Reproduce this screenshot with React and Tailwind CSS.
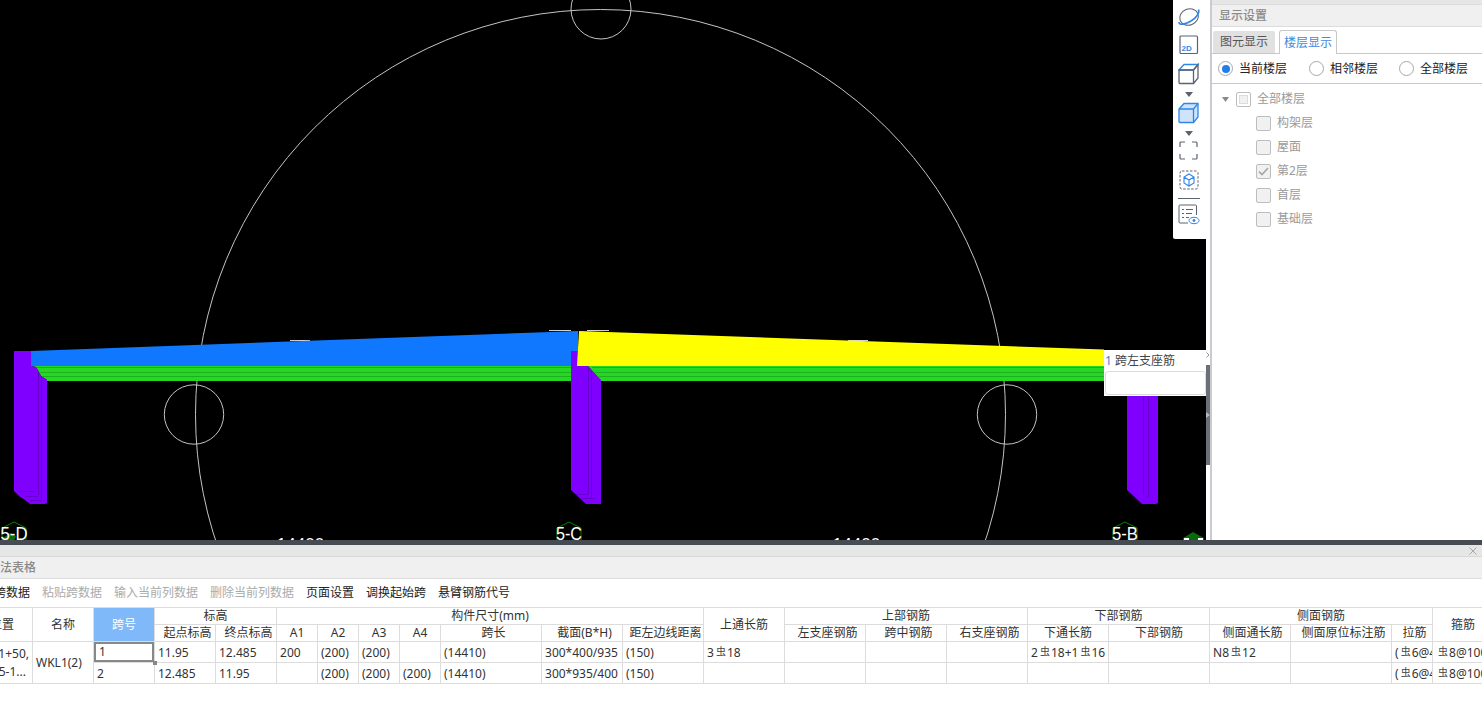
import React from "react";

const F = { fontFamily: '"Noto Sans","Noto Sans CJK SC",sans-serif' };

function Rebar() {
  return <span className="relative top-[-2px] ml-[2px] mr-[1px] text-[10px] text-[#444]">虫</span>;
}

function Canvas() {
  const purple = "#8000ff";
  const line = "#6600cc";
  const hex = (cx) => `${cx - 12},545 ${cx - 12},528 ${cx},522 ${cx + 12},528 ${cx + 12},545`;
  return (
    <svg width="1206" height="540" className="block">
      <g fill="none" stroke="#c4c4c4" strokeWidth="1">
        <circle cx="600.5" cy="414.5" r="405" />
        <circle cx="601" cy="9" r="30" />
        <circle cx="194" cy="414.5" r="29.7" />
        <circle cx="1007" cy="414.5" r="29.7" />
      </g>
      <g stroke="#d0d0d0">
        <line x1="290" y1="340.5" x2="310" y2="340.5" />
        <line x1="549" y1="330.5" x2="571" y2="330.5" />
        <line x1="587" y1="330.5" x2="609" y2="330.5" />
        <line x1="848" y1="340.5" x2="868" y2="340.5" />
      </g>
      <polygon points="31,366 36,367 39,372 41,376 47,380 47,381 571,381 571,366" fill="#24d824" />
      <polygon points="588,366 1104,366 1104,381 601,381" fill="#24d824" />
      <g stroke="#1eb01e">
        <line x1="36" y1="367.5" x2="571" y2="367.5" />
        <line x1="39" y1="372.5" x2="571" y2="372.5" />
        <line x1="41" y1="376.5" x2="571" y2="376.5" />
        <line x1="592" y1="367.5" x2="1104" y2="367.5" />
        <line x1="595" y1="372.5" x2="1104" y2="372.5" />
        <line x1="599" y1="376.5" x2="1104" y2="376.5" />
      </g>
      <polygon points="14,351 31,351 31,366 36,367 39,372 41,376 47,380 47,503 45,504 30,504 25,500 19,496 14,491" fill={purple} />
      <g stroke={line}>
        <line x1="38.5" y1="372" x2="38.5" y2="495" />
        <line x1="41.5" y1="376" x2="41.5" y2="500" />
        <line x1="19" y1="491.5" x2="35" y2="491.5" />
        <line x1="25" y1="496.5" x2="38" y2="496.5" />
        <line x1="30" y1="500.5" x2="41" y2="500.5" />
      </g>
      <polygon points="31,351 578,331 578,366 31,366" fill="#1078ff" />
      <polygon points="571,351 578,351 578,366 588,366 601,380 601,504 586,504 571,490" fill={purple} />
      <g stroke={line}>
        <line x1="588.5" y1="368" x2="588.5" y2="494" />
        <line x1="591.5" y1="371" x2="591.5" y2="498" />
        <line x1="576" y1="494.5" x2="588" y2="494.5" />
        <line x1="581" y1="498.5" x2="595" y2="498.5" />
      </g>
      <polygon points="579,331 1104,349.5 1104,366 577,366" fill="#ffff00" />
      <polygon points="1127,396 1158,396 1158,503 1156,504 1142,504 1127,490" fill={purple} />
      <g stroke={line}>
        <line x1="1143.5" y1="396" x2="1143.5" y2="495" />
        <line x1="1148.5" y1="396" x2="1148.5" y2="498" />
      </g>
      <g fill="none" stroke="#0b7d0b">
        <polygon points={hex(14)} />
        <polygon points={hex(569)} />
        <polygon points={hex(1125)} />
      </g>
      <polygon points="3,538 10,533 16,536 14,541 3,541" fill="#0b6e0b" />
      <g fill="#ffffff" fontSize="18" fontFamily='"Liberation Sans",sans-serif' textAnchor="middle">
        <text x="14" y="540" textLength="27" lengthAdjust="spacingAndGlyphs">5-D</text>
        <text x="569" y="540" textLength="26" lengthAdjust="spacingAndGlyphs">5-C</text>
        <text x="1125" y="540" textLength="26" lengthAdjust="spacingAndGlyphs">5-B</text>
        <text x="300.5" y="550" fontSize="17">14400</text>
        <text x="856.5" y="550" fontSize="17">14400</text>
      </g>
      <polygon points="1183,538 1193,532 1204,538 1204,541 1183,541" fill="#0a6a0a" />
      <rect x="1184" y="538" width="5" height="2" fill="#fff" />
      <rect x="1198" y="538" width="5" height="2" fill="#fff" />
    </svg>
  );
}

function ToolIcons() {
  const g = "#5b6270";
  const b = "#2f86ea";
  return (
    <div className="flex flex-col items-center pr-[1px]">
      <svg width="24" height="22" viewBox="0 0 24 22" className="mt-[6px]">
        <ellipse cx="12" cy="11" rx="9.5" ry="8" transform="rotate(-22 12 11)" fill="none" stroke={g} strokeWidth="1" />
        <path d="M2 16 C2 20 9 18 14 15 C19 12 23 7 21.5 3.5" fill="none" stroke={b} strokeWidth="1.6" />
      </svg>
      <svg width="20" height="20" viewBox="0 0 20 20" className="mt-[7px]">
        <rect x="1" y="1" width="17.5" height="17.5" rx="1" fill="none" stroke={g} strokeWidth="1.2" />
        <text x="2.5" y="15.5" fontSize="8" fontWeight="700" fill={b} fontFamily='"Liberation Sans",sans-serif'>2D</text>
      </svg>
      <svg width="22" height="22" viewBox="0 0 22 22" className="mt-[8px]">
        <path d="M1 7 L6 1.5 H20 L15.5 7 Z" fill="none" stroke={b} strokeWidth="1.3" />
        <path d="M1 7 H15.5 V20.5 H2 a1 1 0 0 1 -1 -1 Z M15.5 7 L20 1.5 V15 L15.5 20.5" fill="none" stroke={g} strokeWidth="1.3" />
      </svg>
      <svg width="8" height="5" viewBox="0 0 8 5" className="mt-[7px]"><path d="M0 0H8L4 5Z" fill={g} /></svg>
      <svg width="22" height="22" viewBox="0 0 22 22" className="mt-[5px]">
        <path d="M1 7 L6 1.5 H20 V15 L15.5 20.5 H2 a1 1 0 0 1 -1 -1 Z" fill="#cfe3fb" stroke={b} strokeWidth="1.3" />
        <path d="M1 7 H15.5 V20.5 M15.5 7 L20 1.5" fill="none" stroke={b} strokeWidth="1.3" />
      </svg>
      <svg width="8" height="5" viewBox="0 0 8 5" className="mt-[7px]"><path d="M0 0H8L4 5Z" fill={g} /></svg>
      <svg width="20" height="20" viewBox="0 0 20 20" className="mt-[5px]">
        <path d="M1 6V2a1 1 0 0 1 1-1H6M13 1h4a1 1 0 0 1 1 1V6M18 13v4a1 1 0 0 1-1 1H13M6 18H2a1 1 0 0 1-1-1V13" fill="none" stroke={g} strokeWidth="1.2" />
      </svg>
      <svg width="20" height="20" viewBox="0 0 20 20" className="mt-[9px]">
        <rect x="1" y="1" width="18" height="18" rx="2" fill="none" stroke={g} strokeDasharray="2.5 1.5" />
        <path d="M10 4 L15 7 V13 L10 16 L5 13 V7 Z M5 7 L10 10 L15 7 M10 10 V16" fill="none" stroke={b} strokeWidth="1.1" />
      </svg>
      <div className="mt-[8px] h-[1px] w-[22px] bg-[#5b6270]" />
      <svg width="22" height="21" viewBox="0 0 22 21" className="mt-[5px]">
        <path d="M18.5 11V2a1 1 0 0 0-1-1H2a1 1 0 0 0-1 1V18a1 1 0 0 0 1 1H10" fill="none" stroke={g} />
        <path d="M4 5.5H6M8 5.5H15M4 9.5H6M8 9.5H14M4 13.5H6M8 13.5H11" fill="none" stroke={g} />
        <ellipse cx="16" cy="16.5" rx="5" ry="3.2" fill="#fff" stroke={b} />
        <circle cx="16" cy="16.5" r="1.4" fill={b} />
      </svg>
    </div>
  );
}

function Radio({ label, on, className }) {
  return (
    <div className={`flex items-center ${className}`}>
      <span className="flex h-[15px] w-[15px] items-center justify-center rounded-full border border-[#a8a8a8] bg-white">
        {on && <span className="h-[8px] w-[8px] rounded-full bg-[#1f7fe8]" />}
      </span>
      <span className="ml-[6px] text-[12px] text-[#222]">{label}</span>
    </div>
  );
}

function TreeItem({ label, check }) {
  return (
    <div className="flex h-[24px] items-center pl-[44px]">
      <span className="flex h-[15px] w-[15px] items-center justify-center rounded-[2px] border border-[#bdbdbd] bg-[#f1f1f1]">
        {check && (
          <svg width="11" height="9" viewBox="0 0 11 9"><path d="M1 4.5 L4 7.5 L10 1" fill="none" stroke="#a5a5a5" strokeWidth="1.6" /></svg>
        )}
      </span>
      <span className="ml-[6px] text-[12px] text-[#9a9a9a]">{label}</span>
    </div>
  );
}

function SidePanel() {
  return (
    <div className="flex w-[270px] shrink-0 flex-col bg-white" style={F}>
      <div className="h-[5px] border-b border-[#dcdcdc] bg-[#e6e6e6]" />
      <div className="flex h-[22px] items-center border-b border-[#dcdcdc] bg-[#f0f0f0] pl-[7px] text-[12px] font-medium text-[#8a8a8a]">显示设置</div>
      <div className="flex h-[27px] items-end gap-[4px] border-b border-[#c8c8c8] pl-[1px]">
        <div className="flex h-[22px] w-[62px] items-center justify-center rounded-t-[2px] bg-[#e1e1e1] text-[12px] text-[#555]">图元显示</div>
        <div className="mb-[-1px] flex h-[24px] w-[58px] items-center justify-center rounded-t-[3px] border border-b-0 border-[#c8c8c8] bg-white text-[12px] text-[#3f8ae0]">楼层显示</div>
      </div>
      <div className="flex h-[30px] items-center border-b border-[#c8c8c8] pl-[6px]">
        <Radio label="当前楼层" on className="w-[91px]" />
        <Radio label="相邻楼层" className="w-[90px]" />
        <Radio label="全部楼层" />
      </div>
      <div className="pt-[3px]">
        <div className="flex h-[24px] items-center pl-[10px]">
          <svg width="7" height="5" viewBox="0 0 7 5"><path d="M0 0H7L3.5 5Z" fill="#8a8a8a" /></svg>
          <span className="ml-[7px] flex h-[15px] w-[15px] items-center justify-center rounded-[2px] border border-[#bdbdbd] bg-white">
            <span className="h-[9px] w-[9px] border border-[#dcdcdc] bg-[#f1f1f1]" />
          </span>
          <span className="ml-[6px] text-[12px] text-[#9a9a9a]">全部楼层</span>
        </div>
        <TreeItem label="构架层" />
        <TreeItem label="屋面" />
        <TreeItem label="第2层" check />
        <TreeItem label="首层" />
        <TreeItem label="基础层" />
      </div>
    </div>
  );
}

const widths = ["w-[61px]", "w-[61px]", "w-[61px]", "w-[61px]", "w-[61px]", "w-[41px]", "w-[41px]", "w-[41px]", "w-[41px]", "w-[101px]", "w-[81px]", "w-[81px]", "w-[81px]", "w-[81px]", "w-[81px]", "w-[81px]", "w-[81px]", "w-[101px]", "w-[81px]", "w-[101px]", "w-[41px]", "w-[61px]"];

const H = "border border-[#dcdcdc] p-0 text-center align-middle font-normal text-[#333] overflow-hidden whitespace-nowrap";
const D = "border border-[#dcdcdc] p-0 pl-[3px] pt-[1px] text-left align-middle font-normal text-[#333] overflow-hidden whitespace-nowrap";

function Row({ cells }) {
  return cells.map((c, i) => <td key={i} className={D}>{c}</td>);
}

const sub = [
  ["起点标高", true], ["终点标高", true], ["A1"], ["A2"], ["A3"], ["A4"], ["跨长", true], ["截面(B*H)", true], ["距左边线距离", true],
  ["左支座钢筋", true], ["跨中钢筋", true], ["右支座钢筋", true], ["下通长筋"], ["下部钢筋"], ["侧面通长筋", true], ["侧面原位标注筋", true], ["拉筋", true],
];

function DataTable() {
  return (
    <table className="ml-[-29px] w-[1522px] table-fixed border-collapse text-[12px] leading-[16px]">
      <colgroup>
        {widths.map((w, i) => <col key={i} className={w} />)}
      </colgroup>
      <thead>
        <tr className="h-[17px]">
          <th rowSpan={2} className={H}>位置</th>
          <th rowSpan={2} className={H}>名称</th>
          <th rowSpan={2} className={`${H} !bg-[#7fb9f9] !text-white`}>跨号</th>
          <th colSpan={2} className={H}>标高</th>
          <th colSpan={7} className={H}>构件尺寸(mm)</th>
          <th rowSpan={2} className={H}>上通长筋</th>
          <th colSpan={3} className={H}>上部钢筋</th>
          <th colSpan={2} className={H}>下部钢筋</th>
          <th colSpan={3} className={H}>侧面钢筋</th>
          <th rowSpan={2} className={H}>箍筋</th>
        </tr>
        <tr className="h-[17px]">
          {sub.map(([t, shift]) => (
            <th key={t} className={`${H} ${shift ? "pl-[5px]" : ""}`}>{t}</th>
          ))}
        </tr>
      </thead>
      <tbody>
        <tr className="h-[21px]">
          <td rowSpan={2} className={`${D} leading-[18px]`}>
            <div className="pr-[3px] text-right">1+50,</div>
            <div className="pr-[6px] text-right">5-1...</div>
          </td>
          <td rowSpan={2} className={D}>WKL1(2)</td>
          <td className="relative border border-[#dcdcdc] p-0 text-left font-normal text-[#333]">
            <div className="flex h-[20px] items-center border-2 border-[#888] pl-[3px]">1</div>
            <span className="absolute bottom-[-3px] right-[-3px] h-[4px] w-[4px] bg-[#888]" />
          </td>
          <Row cells={["11.95", "12.485", "200", "(200)", "(200)", "", "(14410)", "300*400/935", "(150)", <>3<Rebar />18</>, "", "", "", <>2<Rebar />18+1<Rebar />16</>, "", <>N8<Rebar />12</>, "", <>(<Rebar />6@400)</>, <><Rebar />8@100/200</>]} />
        </tr>
        <tr className="h-[21px]">
          <Row cells={["2", "12.485", "11.95", "", "(200)", "(200)", "(200)", "(14410)", "300*935/400", "(150)", "", "", "", "", "", "", "", "", <>(<Rebar />6@400)</>, <><Rebar />8@100/200</>]} />
        </tr>
      </tbody>
    </table>
  );
}

function BottomPanel() {
  return (
    <div className="flex-1 overflow-hidden bg-white" style={F}>
      <div className="h-[5px] bg-[#474c53]" />
      <div className="flex h-[12px] items-center justify-end border-b border-[#d8d8d8] bg-[#e6e6e6] pr-[5px]">
        <svg width="8" height="8" viewBox="0 0 8 8"><path d="M0.5 0.5 L7.5 7.5 M7.5 0.5 L0.5 7.5" stroke="#a8a8a8" /></svg>
      </div>
      <div className="flex h-[22px] items-center border-b border-[#dcdcdc] bg-[#f0f0f0] text-[12px] font-medium text-[#8a8a8a]">
        <span className="ml-[-12px] whitespace-nowrap">平法表格</span>
      </div>
      <div className="flex h-[28px] items-center gap-[12px] text-[12px] text-[#222]">
        <span className="ml-[-30px] whitespace-nowrap">复制跨数据</span>
        <span className="text-[#ababab]">粘贴跨数据</span>
        <span className="text-[#ababab]">输入当前列数据</span>
        <span className="text-[#ababab]">删除当前列数据</span>
        <span>页面设置</span>
        <span>调换起始跨</span>
        <span>悬臂钢筋代号</span>
      </div>
      <DataTable />
    </div>
  );
}

export default function App() {
  return (
    <div className="flex h-[714px] w-[1482px] flex-col overflow-hidden bg-white">
      <div className="flex h-[540px] shrink-0">
        <div className="relative h-[540px] w-[1206px] shrink-0 overflow-hidden bg-black">
          <Canvas />
          <div className="absolute right-0 top-0 h-[239px] w-[33px] rounded-bl-[2px] bg-white">
            <ToolIcons />
          </div>
          <div className="absolute right-0 top-[350px] h-[46px] w-[102px] bg-white text-[12px] text-[#444]" style={F}>
            <div className="flex h-[21px] items-center pl-[1px]">
              <span className="text-[#3f7fc8]">1</span>
              <span className="ml-[3px]">跨左支座筋</span>
            </div>
            <div className="ml-[1px] h-[24px] rounded-[3px] border border-[#dcdcdc] bg-white" />
          </div>
        </div>
        <div className="relative w-[4px] shrink-0 bg-white">
          <svg width="4" height="6" viewBox="0 0 4 6" className="absolute left-0 top-[352px]"><path d="M0.5 0.5 L3 3 L0.5 5.5" fill="none" stroke="#999" /></svg>
          <div className="absolute left-0 top-[365px] h-[100px] w-[4px] bg-[#6b7078]" />
          <svg width="4" height="6" viewBox="0 0 4 6" className="absolute left-0 top-[412px]"><path d="M0 0L4 3L0 6Z" fill="#b5b8bc" /></svg>
        </div>
        <div className="w-[2px] shrink-0 bg-[#c8ccd0]" />
        <SidePanel />
      </div>
      <BottomPanel />
    </div>
  );
}
